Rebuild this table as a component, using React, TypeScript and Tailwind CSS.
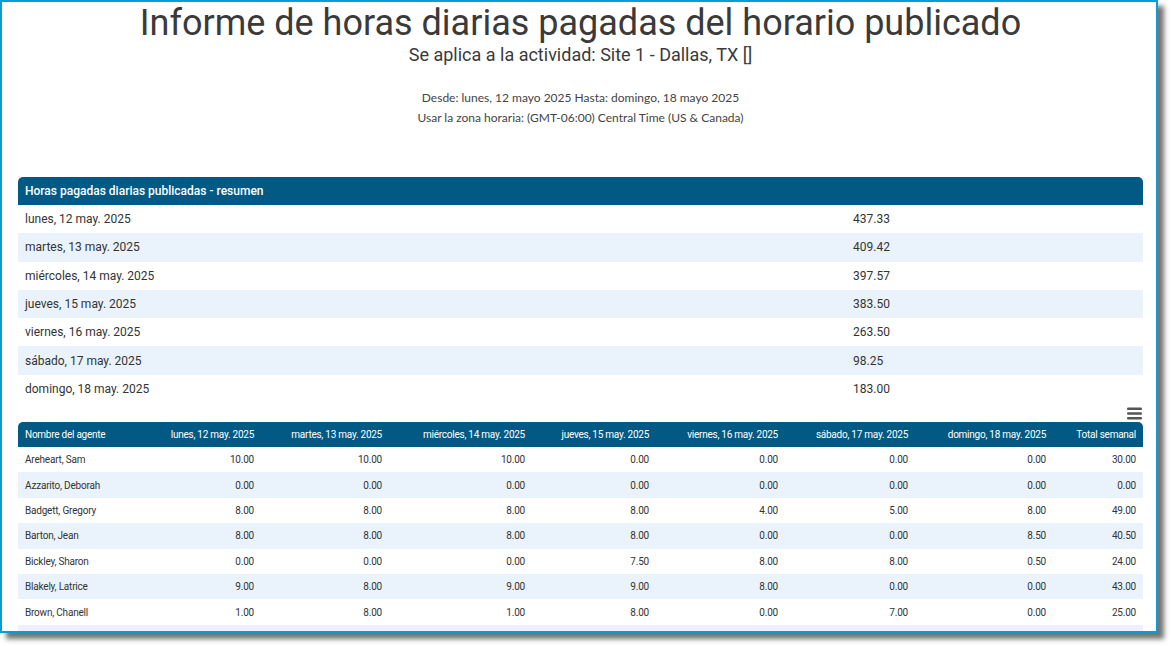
import React from "react";

const summary: [string, string][] = [
  ["lunes, 12 may. 2025", "437.33"],
  ["martes, 13 may. 2025", "409.42"],
  ["miércoles, 14 may. 2025", "397.57"],
  ["jueves, 15 may. 2025", "383.50"],
  ["viernes, 16 may. 2025", "263.50"],
  ["sábado, 17 may. 2025", "98.25"],
  ["domingo, 18 may. 2025", "183.00"],
];

const cols = [
  { label: "Nombre del agente", w: "w-[122px]" },
  { label: "lunes, 12 may. 2025", w: "w-[121px]" },
  { label: "martes, 13 may. 2025", w: "w-[128px]" },
  { label: "miércoles, 14 may. 2025", w: "w-[143px]" },
  { label: "jueves, 15 may. 2025", w: "w-[124px]" },
  { label: "viernes, 16 may. 2025", w: "w-[129px]" },
  { label: "sábado, 17 may. 2025", w: "w-[130px]" },
  { label: "domingo, 18 may. 2025", w: "w-[138px]" },
  { label: "Total semanal", w: "w-[90px]" },
];

const agents: string[][] = [
  ["Areheart, Sam", "10.00", "10.00", "10.00", "0.00", "0.00", "0.00", "0.00", "30.00"],
  ["Azzarito, Deborah", "0.00", "0.00", "0.00", "0.00", "0.00", "0.00", "0.00", "0.00"],
  ["Badgett, Gregory", "8.00", "8.00", "8.00", "8.00", "4.00", "5.00", "8.00", "49.00"],
  ["Barton, Jean", "8.00", "8.00", "8.00", "8.00", "0.00", "0.00", "8.50", "40.50"],
  ["Bickley, Sharon", "0.00", "0.00", "0.00", "7.50", "8.00", "8.00", "0.50", "24.00"],
  ["Blakely, Latrice", "9.00", "8.00", "9.00", "9.00", "8.00", "0.00", "0.00", "43.00"],
  ["Brown, Chanell", "1.00", "8.00", "1.00", "8.00", "0.00", "7.00", "0.00", "25.00"],
  ["", "", "", "", "", "", "", "", ""],
];

export default function App() {
  return (
    <div className="w-[1172px] h-[646px] bg-white overflow-hidden">
      <div className="w-[1158px] h-[633px] border-2 border-[#0a9cd9] bg-white shadow-[6px_6px_5px_rgba(0,0,0,0.55)] overflow-hidden pl-[16px] pr-[13px] font-['Roboto',sans-serif] text-[#3b3b3b]">
        <h1 className="text-center text-[36px] leading-[40px] pt-[1px] text-[#3a3a3a]">
          Informe de horas diarias pagadas del horario publicado
        </h1>
        <div className="text-center text-[18px] leading-[24px] text-[#3a3a3a]">
          Se aplica a la actividad: Site 1 - Dallas, TX []
        </div>
        <div className="mt-[21px] text-center font-['Lato',sans-serif] text-[12px] leading-[20px] text-[#444]">
          <div>Desde: lunes, 12 mayo 2025 Hasta: domingo, 18 mayo 2025</div>
          <div>Usar la zona horaria: (GMT-06:00) Central Time (US &amp; Canada)</div>
        </div>

        <div className="mt-[49px]">
          <div className="h-[28px] bg-[#025a84] rounded-t-[5px] flex items-center px-[7px] text-white text-[12px] font-medium">
            Horas pagadas diarias publicadas - resumen
          </div>
          {summary.map(([d, v], i) => (
            <div
              key={d}
              className={`h-[28.3px] flex items-center text-[12px] text-[#333] ${i % 2 === 1 ? "bg-[#eaf3fb]" : "bg-white"}`}
            >
              <div className="w-[828px] px-[7px]">{d}</div>
              <div className="px-[7px]">{v}</div>
            </div>
          ))}
        </div>

        <div className="h-[19px] flex justify-end items-center">
          <svg width="15" height="13" viewBox="0 0 15 13" className="mr-[1px] mt-[1px]">
            <rect x="0" y="0.5" width="15" height="2.6" rx="1.2" fill="#555" />
            <rect x="0" y="5.2" width="15" height="2.6" rx="1.2" fill="#555" />
            <rect x="0" y="9.9" width="15" height="2.6" rx="1.2" fill="#555" />
          </svg>
        </div>

        <table className="table-fixed border-collapse w-[1125px] text-[10px] tracking-[-0.2px]">
          <colgroup>
            {cols.map((c) => (
              <col key={c.label} className={c.w} />
            ))}
          </colgroup>
          <thead>
            <tr className="h-[25px] bg-[#025a84] text-white">
              {cols.map((c, i) => (
                <th
                  key={c.label}
                  className={`font-normal px-[7px] whitespace-nowrap tracking-[-0.25px] ${i === 0 ? "text-left rounded-tl-[5px]" : "text-right"} ${i === cols.length - 1 ? "rounded-tr-[5px]" : ""}`}
                >
                  {c.label}
                </th>
              ))}
            </tr>
          </thead>
          <tbody>
            {agents.map((r, ri) => (
              <tr key={ri} className={`h-[25.4px] text-[#333] ${ri % 2 === 1 ? "bg-[#eaf3fb]" : "bg-white"}`}>
                {r.map((c, ci) => (
                  <td key={ci} className={`px-[7px] whitespace-nowrap ${ci === 0 ? "text-left" : "text-right"}`}>
                    {c}
                  </td>
                ))}
              </tr>
            ))}
          </tbody>
        </table>
      </div>
    </div>
  );
}
